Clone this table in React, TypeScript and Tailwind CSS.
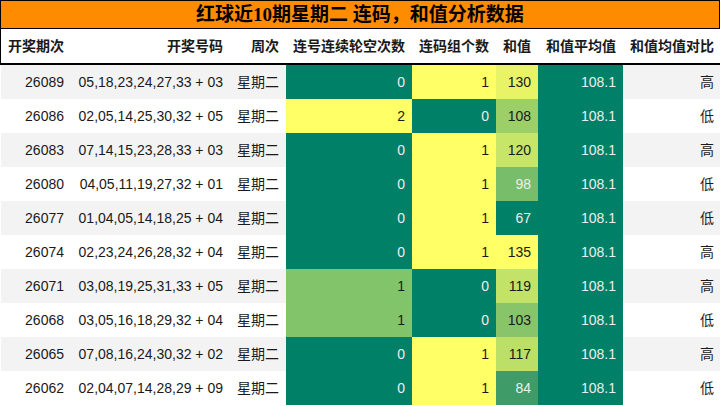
import React from "react";

type Row = {
    issue: string;
    nums: string;
    week: string;
    gap: number;
    groups: number;
    sum: number;
    sumBg: string;
    sumLight: boolean;
    cmp: string;
};

const rows: Row[] = [
    { issue: "26089", nums: "05,18,23,24,27,33 + 03", week: "星期二", gap: 0, groups: 1, sum: 130, sumBg: "bg-[#e9f366]", sumLight: false, cmp: "高" },
    { issue: "26086", nums: "02,05,14,25,30,32 + 05", week: "星期二", gap: 2, groups: 0, sum: 108, sumBg: "bg-[#9dcf68]", sumLight: false, cmp: "低" },
    { issue: "26083", nums: "07,14,15,23,28,33 + 03", week: "星期二", gap: 0, groups: 1, sum: 120, sumBg: "bg-[#c7e568]", sumLight: false, cmp: "高" },
    { issue: "26080", nums: "04,05,11,19,27,32 + 01", week: "星期二", gap: 0, groups: 1, sum: 98, sumBg: "bg-[#78bd6a]", sumLight: true, cmp: "低" },
    { issue: "26077", nums: "01,04,05,14,18,25 + 04", week: "星期二", gap: 0, groups: 1, sum: 67, sumBg: "bg-[#008066]", sumLight: true, cmp: "低" },
    { issue: "26074", nums: "02,23,24,26,28,32 + 04", week: "星期二", gap: 0, groups: 1, sum: 135, sumBg: "bg-[#ffff66]", sumLight: false, cmp: "高" },
    { issue: "26071", nums: "03,08,19,25,31,33 + 05", week: "星期二", gap: 1, groups: 0, sum: 119, sumBg: "bg-[#c3e368]", sumLight: false, cmp: "高" },
    { issue: "26068", nums: "03,05,16,18,29,32 + 04", week: "星期二", gap: 1, groups: 0, sum: 103, sumBg: "bg-[#87c46a]", sumLight: false, cmp: "低" },
    { issue: "26065", nums: "07,08,16,24,30,32 + 02", week: "星期二", gap: 0, groups: 1, sum: 117, sumBg: "bg-[#bcdf68]", sumLight: false, cmp: "高" },
    { issue: "26062", nums: "02,04,07,14,28,29 + 09", week: "星期二", gap: 0, groups: 1, sum: 84, sumBg: "bg-[#3f9b67]", sumLight: true, cmp: "低" },
];

const headers = ["开奖期次", "开奖号码", "周次", "连号连续轮空次数", "连码组个数", "和值", "和值平均值", "和值均值对比"];

const cols = "grid grid-cols-[70px_159px_56px_126px_84px_42px_85px_98px]";

// 0 = green, 1 = light green, 2+ = yellow
const gapCell = (v: number) => {
    if (v >= 2) return "bg-[#ffff66] text-[#1a1a1a]";
    if (v === 1) return "bg-[#81c46a] text-[#1a1a1a]";
    return "bg-[#008066] text-[#eeeeee]";
};

const groupCell = (v: number) => (v >= 1 ? "bg-[#ffff66] text-[#1a1a1a]" : "bg-[#008066] text-[#eeeeee]");

export default function App() {
    return (
        <div className="w-[720px] h-[406px] bg-white overflow-hidden font-['Liberation_Sans','Noto_Sans_CJK_SC',sans-serif] text-[14px] text-[#1a1a1a]">
            {/* Title */}
            <div className="h-[29px] border border-black bg-[#ff8c00] flex items-center justify-center">
                <span className="text-[19px] font-bold text-black font-['Liberation_Serif','Noto_Sans_CJK_SC',serif] leading-none">
                    红球近10期星期二 连码，和值分析数据
                </span>
            </div>

            {/* Header */}
            <div className={`${cols} h-[36px] border-l border-black border-b-2 font-bold`}>
                {headers.map((h) => (
                    <div key={h} className="flex items-center justify-end pr-[7px] whitespace-nowrap">
                        {h}
                    </div>
                ))}
            </div>

            {/* Rows */}
            <div className="border-l border-white">
                {rows.map((r, i) => {
                    const stripe = i % 2 === 0 ? "bg-[#f3f3f3]" : "bg-white";
                    return (
                        <div key={r.issue} className={`${cols} h-[34px]`}>
                            <div className={`${stripe} flex items-center justify-end pr-[7px]`}>{r.issue}</div>
                            <div className={`${stripe} flex items-center justify-end pr-[7px] whitespace-nowrap`}>{r.nums}</div>
                            <div className={`${stripe} flex items-center justify-end pr-[7px]`}>{r.week}</div>
                            <div className={`${gapCell(r.gap)} flex items-center justify-end pr-[7px]`}>{r.gap}</div>
                            <div className={`${groupCell(r.groups)} flex items-center justify-end pr-[7px]`}>{r.groups}</div>
                            <div
                                className={`${r.sumBg} ${r.sumLight ? "text-[#eeeeee]" : "text-[#1a1a1a]"} flex items-center justify-end pr-[7px]`}
                            >
                                {r.sum}
                            </div>
                            <div className="bg-[#008066] text-[#eeeeee] flex items-center justify-end pr-[7px]">108.1</div>
                            <div className={`${stripe} flex items-center justify-end pr-[7px]`}>{r.cmp}</div>
                        </div>
                    );
                })}
            </div>
        </div>
    );
}
